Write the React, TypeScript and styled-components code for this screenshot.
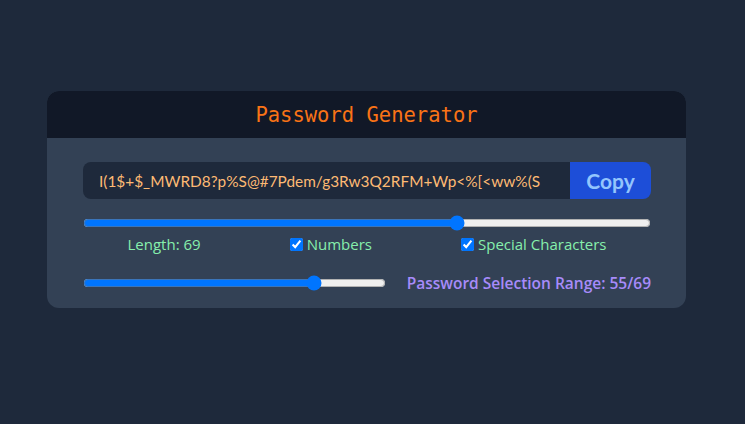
import { FC, useState } from 'react'
import styled, { createGlobalStyle } from 'styled-components'

const GlobalStyle = createGlobalStyle`
  html, body {
    margin: 0;
    padding: 0;
    background: #1e293b;
  }
  body {
    font-family: 'Open Sans', 'Noto Sans', sans-serif;
  }
`

const StyledPage = styled.div`
  min-height: 424px;
  padding: 91px 59px 0 47px;
  box-sizing: border-box;
`

const StyledCard = styled.div`
  width: 639px;
  background-color: #334155;
  border-radius: 12px;
  overflow: hidden;
`

const StyledHeader = styled.h1`
  margin: 0;
  height: 47px;
  display: flex;
  align-items: center;
  justify-content: center;
  background-color: #111827;
  color: #f97316;
  font-family: 'DejaVu Sans Mono', monospace;
  font-weight: normal;
  font-size: 20.5px;
`

const StyledBody = styled.div`
  padding: 24px 35px 14px 36px;
`

const StyledInputRow = styled.div`
  display: flex;
  height: 37px;
  border-radius: 8px;
  overflow: hidden;
`

const StyledPasswordInput = styled.input`
  flex: 1;
  min-width: 0;
  border: none;
  outline: none;
  padding: 0 16px;
  background-color: #1e293b;
  color: #fdba74;
  font-family: Lato, sans-serif;
  font-size: 15.4px;
`

const StyledCopyButton = styled.button`
  width: 81px;
  border: none;
  background-color: #1d4ed8;
  color: #93c5fd;
  font-family: Lato, sans-serif;
  font-weight: 700;
  font-size: 21px;
  cursor: pointer;
`

const StyledRange = styled.input<{ $width?: string }>`
  display: block;
  margin: 0;
  width: ${({ $width }) => $width ?? '100%'};
  cursor: pointer;
`

const StyledFirstRange = styled.div`
  padding-top: 16px;
`

const StyledOptions = styled.div`
  display: flex;
  justify-content: space-around;
  align-items: center;
  margin-top: 3px;
  color: #86efac;
  font-size: 15px;
`

const StyledLabel = styled.label`
  display: flex;
  align-items: center;
  gap: 4px;
`

const StyledCheckbox = styled.input`
  margin: 0;
  width: 13px;
  height: 13px;
`

const StyledRangeRow = styled.div`
  display: flex;
  align-items: center;
  justify-content: space-between;
  margin-top: 18px;
`

const StyledRangeText = styled.span`
  color: #a78bfa;
  font-weight: 600;
  font-size: 15.5px;
`

const App: FC = () => {
  const [length, setLength] = useState(69)
  const [numbers, setNumbers] = useState(true)
  const [special, setSpecial] = useState(true)
  const [selection, setSelection] = useState(55)
  const password =
    'I(1$+$_MWRD8?p%S@#7Pdem/g3Rw3Q2RFM+Wp<%[<ww%(S'

  return (
    <>
      <GlobalStyle />
      <StyledPage>
        <StyledCard>
          <StyledHeader>Password Generator</StyledHeader>
          <StyledBody>
            <StyledInputRow>
              <StyledPasswordInput value={password} readOnly />
              <StyledCopyButton>Copy</StyledCopyButton>
            </StyledInputRow>
            <StyledFirstRange>
              <StyledRange
                type="range"
                min={8}
                max={100}
                value={length}
                onChange={(e) => setLength(Number(e.target.value))}
              />
            </StyledFirstRange>
            <StyledOptions>
              <span>Length: {length}</span>
              <StyledLabel>
                <StyledCheckbox
                  type="checkbox"
                  checked={numbers}
                  onChange={() => setNumbers(!numbers)}
                />
                Numbers
              </StyledLabel>
              <StyledLabel>
                <StyledCheckbox
                  type="checkbox"
                  checked={special}
                  onChange={() => setSpecial(!special)}
                />
                Special Characters
              </StyledLabel>
            </StyledOptions>
            <StyledRangeRow>
              <StyledRange
                type="range"
                $width="303px"
                min={6}
                max={length}
                value={selection}
                onChange={(e) => setSelection(Number(e.target.value))}
              />
              <StyledRangeText>
                Password Selection Range: {selection}/{length}
              </StyledRangeText>
            </StyledRangeRow>
          </StyledBody>
        </StyledCard>
      </StyledPage>
    </>
  )
}

export default App
